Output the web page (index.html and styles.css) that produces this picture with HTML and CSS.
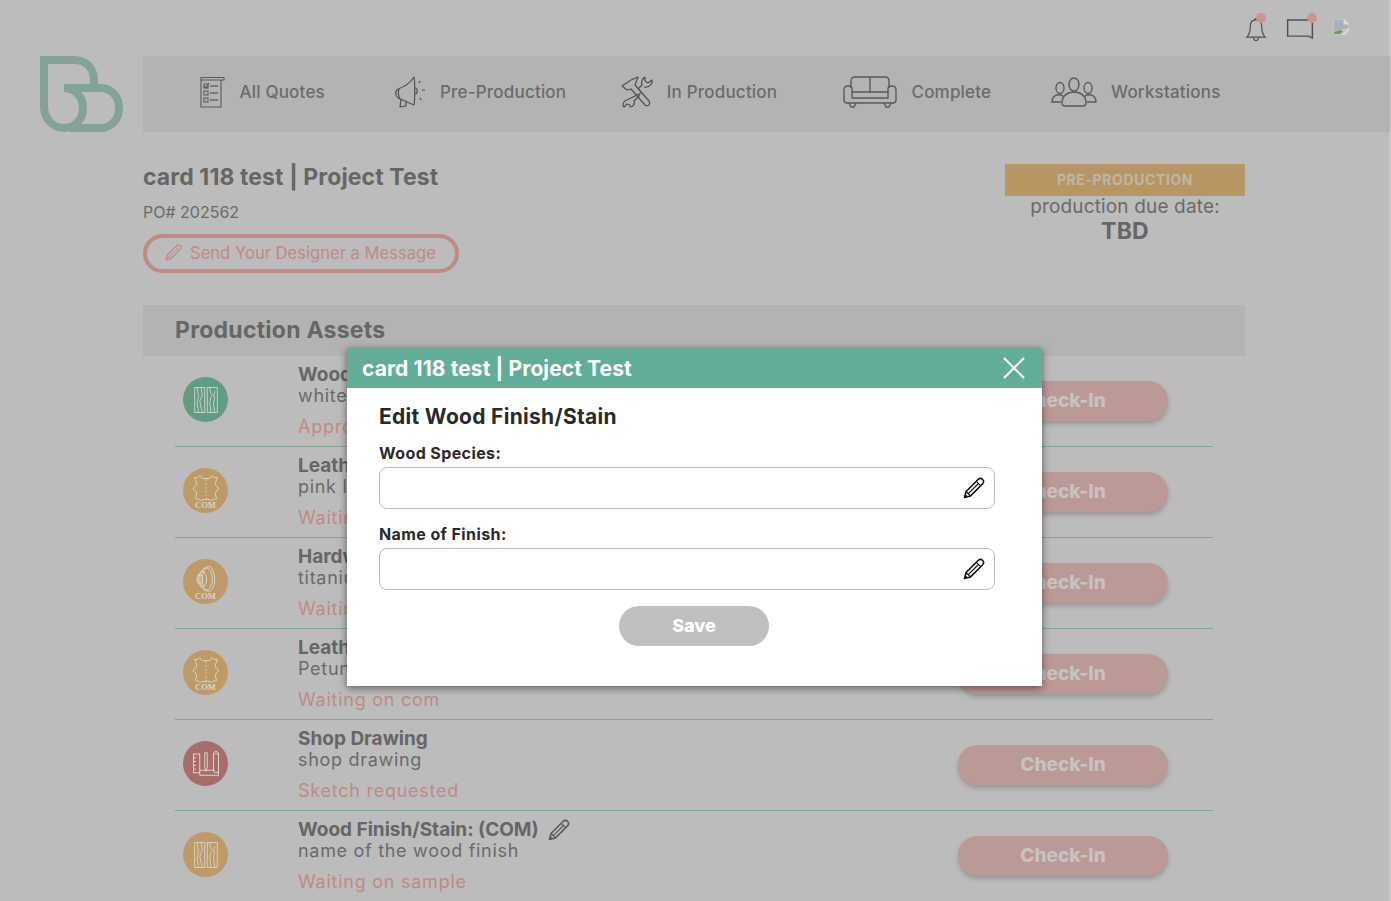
FILE: index.html
```html
<!DOCTYPE html>
<html lang="en">

<head>
    <meta charset="UTF-8" />
    <meta name="viewport" content="width=device-width, initial-scale=1.0" />
    <title>card 118 test | Project Test</title>
    <link rel="stylesheet" href="styles.css">
</head>

<body>
    <svg class="defs" xmlns="http://www.w3.org/2000/svg">
        <symbol id="pencil" viewBox="0 0 24 24">
            <path d="M2.500 21.500l1.600-6L16.300 3.300a2.900 2.900 0 0 1 4.200 0l.2.2a2.900 2.900 0 0 1 0 4.200L8.500 19.900z" fill="none" stroke="currentColor" stroke-width="1.600" stroke-linejoin="round" />
            <path d="M14.300 5.300l4.400 4.400M4.100 15.500l4.400 4.400M6.300 17.700L16.500 7.500" fill="none" stroke="currentColor" stroke-width="1.200" />
            <path d="M2.500 21.500l.9-3.400 2.500 2.500z" fill="currentColor" />
        </symbol>
        <symbol id="wood" viewBox="0 0 24 24">
            <g fill="none" stroke="currentColor" stroke-width=".7">
                <rect x="3" y="2" width="8" height="20" />
                <rect x="13" y="2" width="8" height="20" />
                <path d="M5 2l1 7-1 5 1 8M8 2l1 6-2 5 2 9M15 2l1 5 2 2 1-4M16 9l-1 5 1 8M19 9l-1 6 1 7" />
            </g>
        </symbol>
        <symbol id="leather" viewBox="0 0 30 24">
            <path d="M10 2c1 2 2 2.500 5 2.500S19 4 20 2c1 1.500 3 2 4 1.500 0 2-1.500 3-1.500 5 0 2 2 3 3 4-1.500 1-3 2.500-3 4.500 0 1.500 1 2.500 1 3.500-1.500 0-3 .5-4 1.500-1-.5-3-1-4.500-1s-3.500.5-4.500 1c-1-1-2.500-1.500-4-1.500 0-1 1-2 1-3.500 0-2-1.500-3.500-3-4.500 1-1 3-2 3-4 0-2-1.500-3-1.500-5 1 .5 3 0 4-1.500z" fill="none" stroke="currentColor" stroke-width=".8" />
            <path d="M15 5v16" fill="none" stroke="currentColor" stroke-width=".7" stroke-dasharray="1.500 1.500" />
        </symbol>
        <symbol id="knob" viewBox="0 0 30 24">
            <g fill="none" stroke="currentColor" stroke-width=".8">
                <ellipse cx="17" cy="12" rx="5" ry="10" />
                <ellipse cx="15" cy="12" rx="5" ry="9" />
                <ellipse cx="12" cy="12" rx="3.500" ry="6" />
                <rect x="8" y="9" width="4" height="6" rx="1" />
            </g>
        </symbol>
        <symbol id="drawing" viewBox="0 0 24 24">
            <g fill="none" stroke="currentColor" stroke-width=".8">
                <rect x="2" y="4" width="5" height="15" />
                <path d="M2 7h2M2 10h2M2 13h2M2 16h2" />
                <path d="M7 17h12M19 4h3v17H7v-2" />
                <rect x="18" y="2" width="4" height="17" rx="2" />
                <path d="M11 3h2v12l-1 3-1-3z" />
            </g>
        </symbol>
    </svg>

    <div class="page">
        <header class="topbar">
            <span class="top-icon">
                <svg class="bell" viewBox="0 0 22 24"><path d="M11 2c-4 0-6 3-6 7 0 5-1 8-3.500 11h19c-2.500-3-3.500-6-3.500-11 0-4-2-7-6-7zM8.500 20.500c0 2 1 3 2.500 3s2.500-1 2.500-3M10 2V1h2v1" fill="none" stroke="#505050" stroke-width="1.300" /></svg>
                <i class="dot dot-bell"></i>
            </span>
            <span class="top-icon">
                <svg class="chat" viewBox="0 0 28 21"><path d="M1 1h26v19l-4-2H1z" fill="none" stroke="#505050" stroke-width="1.500" /></svg>
                <i class="dot dot-chat"></i>
            </span>
            <svg class="broken" viewBox="0 0 16 16">
                <path d="M0 0h11l5 5v11H0z" fill="#c4c4c4" />
                <path d="M1 1h9v5h5v3L1 12z" fill="#a9b0bc" />
                <path d="M1 15v-2l6-2 3 1-3 3z" fill="#6f9a63" />
                <path d="M11 0l5 5h-5z" fill="#dcdcdc" />
                <path d="M9 16l7-7v2l-5 5z" fill="#e0e0e0" />
            </svg>
        </header>

        <div class="navrow">
            <svg class="logo" viewBox="0 0 83 76">
                <path d="M4 4H34C46 4 54 12 54 24V32M4 0V50C4 63 13 72 24 72C36 72 43 62 43 52C43 41 35 32 24 32H60C72 32 79 41 79 52C79 63 72 72 60 72H30" fill="none" stroke="#83a398" stroke-width="8" />
            </svg>
            <nav class="nav">
                <div class="nav-inner">
                    <a class="nav-item">
                        <svg class="ic-quotes" viewBox="0 0 26 32">
                            <g fill="none" stroke="#5a5a5a" stroke-width="1.100">
                                <path d="M2 4V31H22V4M2 1.500H25V4H2z" />
                                <path d="M5 8h4v4H5zM5 15h4v4H5zM5 22h4v4H5z" />
                                <path d="M5 10l2 2 3-5" />
                            </g>
                            <path d="M11 9h8v2h-8zM11 16h8v2h-8zM11 23h8v2h-8z" fill="#7a7a7a" />
                        </svg>
                        All Quotes
                    </a>
                    <a class="nav-item">
                        <svg class="ic-mega" viewBox="0 0 31 32">
                            <g fill="none" stroke="#505050" stroke-width="1.200" stroke-linejoin="round">
                                <path d="M19 1C15 7 9 11 3 13C0 15 0 20 3 22L19 29C20 24 20 6 19 1z" />
                                <path d="M4 13C3 16 3 19 5 23M6 23L5 31L11 30L11 25" />
                                <path d="M20 12C23 12 23 18 20 18M25 5L24 7M27 14H30M25 22L26 24M8 17h.1" />
                            </g>
                        </svg>
                        Pre-Production
                    </a>
                    <a class="nav-item">
                        <svg class="ic-tools" viewBox="0 0 32 32">
                            <g fill="none" stroke="#505050" stroke-width="1.200" stroke-linejoin="round">
                                <path d="M10 4L17 1L14 9L28 25C30 28 27 31 24 29L10 13L6 14L1 10z" />
                                <path d="M24 1C21 3 20 6 21 9L17 13M20 17L6 24C2 25 1 29 3 31L6 28L9 29L9 31C12 31 14 28 13 25L19 19M24 1L24 5L27 7L31 4C32 8 28 12 23 11" />
                            </g>
                        </svg>
                        In Production
                    </a>
                    <a class="nav-item">
                        <svg class="ic-sofa" viewBox="0 0 54 32">
                            <g fill="none" stroke="#5a5a5a" stroke-width="1.400" stroke-linejoin="round">
                                <path d="M8 12V5C8 3 9 1 12 1H42C45 1 46 3 46 5V12M27 1V17" />
                                <path d="M9 16V13C9 11 7 10 5 10C3 10 1 11 1 14V24C1 26 2 27 4 27H50C52 27 53 26 53 24V14C53 11 51 10 49 10C47 10 45 11 45 13V16z" />
                                <path d="M9 16V22H45V16M6 27L8 31H11L13 27M41 27L43 31H46L48 27" />
                            </g>
                        </svg>
                        Complete
                    </a>
                    <a class="nav-item">
                        <svg class="ic-people" viewBox="0 0 46 30">
                            <g fill="none" stroke="#5a5a5a" stroke-width="1.400">
                                <ellipse cx="23" cy="7.500" rx="5" ry="6.500" />
                                <ellipse cx="9" cy="11" rx="4" ry="5.500" />
                                <ellipse cx="37" cy="11" rx="4" ry="5.500" />
                                <path d="M14 29C12 29 11 28 11 26C11 19 16 15 23 15C30 15 35 19 35 26C35 28 34 29 32 29z" />
                                <path d="M12 19C6 16 1 19 1 25H10M34 19C40 16 45 19 45 25H36" />
                            </g>
                        </svg>
                        Workstations
                    </a>
                </div>
            </nav>
        </div>

        <main class="content">
            <section class="info">
                <div>
                    <h1>card 118 test | Project Test</h1>
                    <p class="po">PO# 202562</p>
                    <button class="msg-btn">
                        <svg class="ic-18"><use href="#pencil" /></svg>
                        Send Your Designer a Message
                    </button>
                </div>
                <div class="status">
                    <div class="status-tag">PRE-PRODUCTION</div>
                    <div class="due-label">production due date:</div>
                    <div class="due-value">TBD</div>
                </div>
            </section>

            <section>
                <h2 class="assets-title">Production Assets</h2>
                <div class="assets">
                    <div class="asset">
                        <span class="circle green"><svg class="ic-wood"><use href="#wood" /></svg></span>
                        <div class="asset-text">
                            <h3>Wood Species:</h3>
                            <p class="sub">white oak</p>
                            <p class="state">Approved</p>
                        </div>
                        <button class="check">Check-In</button>
                    </div>
                    <div class="asset">
                        <span class="circle tan">
                            <svg class="ic-leather"><use href="#leather" /></svg>
                            <span class="com">COM</span>
                        </span>
                        <div class="asset-text">
                            <h3>Leather: (COM)</h3>
                            <p class="sub">pink leather</p>
                            <p class="state">Waiting on com</p>
                        </div>
                        <button class="check">Check-In</button>
                    </div>
                    <div class="asset">
                        <span class="circle tan">
                            <svg class="ic-leather"><use href="#knob" /></svg>
                            <span class="com">COM</span>
                        </span>
                        <div class="asset-text">
                            <h3>Hardware: (COM)</h3>
                            <p class="sub">titanium</p>
                            <p class="state">Waiting on com</p>
                        </div>
                        <button class="check">Check-In</button>
                    </div>
                    <div class="asset">
                        <span class="circle tan">
                            <svg class="ic-leather"><use href="#leather" /></svg>
                            <span class="com">COM</span>
                        </span>
                        <div class="asset-text">
                            <h3>Leather: (COM)</h3>
                            <p class="sub">Petunia</p>
                            <p class="state">Waiting on com</p>
                        </div>
                        <button class="check">Check-In</button>
                    </div>
                    <div class="asset">
                        <span class="circle red"><svg class="ic-wood"><use href="#drawing" /></svg></span>
                        <div class="asset-text">
                            <h3>Shop Drawing</h3>
                            <p class="sub">shop drawing</p>
                            <p class="state">Sketch requested</p>
                        </div>
                        <button class="check">Check-In</button>
                    </div>
                    <div class="asset">
                        <span class="circle tan"><svg class="ic-wood"><use href="#wood" /></svg></span>
                        <div class="asset-text">
                            <h3>Wood Finish/Stain: (COM) <svg class="ic-edit"><use href="#pencil" /></svg></h3>
                            <p class="sub">name of the wood finish</p>
                            <p class="state">Waiting on sample</p>
                        </div>
                        <button class="check">Check-In</button>
                    </div>
                </div>
            </section>
        </main>
    </div>

    <div class="modal">
        <div class="modal-head">
            <span>card 118 test | Project Test</span>
            <svg class="close" viewBox="0 0 22 22"><path d="M1 1l20 20M21 1L1 21" fill="none" stroke="#fff" stroke-width="2.200" /></svg>
        </div>
        <form class="modal-body">
            <h2>Edit Wood Finish/Stain</h2>
            <label for="species">Wood Species:</label>
            <div class="field">
                <input type="text" id="species" />
                <svg class="field-ic"><use href="#pencil" /></svg>
            </div>
            <label for="finish">Name of Finish:</label>
            <div class="field">
                <input type="text" id="finish" />
                <svg class="field-ic"><use href="#pencil" /></svg>
            </div>
            <button type="button" class="save">Save</button>
        </form>
    </div>
</body>

</html>
```

FILE: styles.css
```css
* {
    margin: 0;
    padding: 0;
    box-sizing: border-box;
}

html,
body {
    height: 901px;
    overflow: hidden;
}

body {
    font-family: 'Inter', 'Liberation Sans', sans-serif;
    background-color: #bcbcbc;
    color: #666;
    position: relative;
    border-right: 1px solid #d2d2d2;
}

.defs {
    display: none;
}

button {
    font-family: inherit;
    border: none;
}

/* top bar */
.topbar {
    height: 56px;
    display: flex;
    justify-content: flex-end;
    align-items: flex-start;
    gap: 19px;
    padding: 18px 41px 0 0;
}

.top-icon {
    position: relative;
    display: block;
}

.bell {
    width: 22px;
    height: 23px;
    display: block;
}

.chat {
    width: 28px;
    height: 20px;
    display: block;
    margin-top: 1px;
}

.broken {
    width: 16px;
    height: 16px;
    margin-top: 1px;
}

.dot {
    position: absolute;
    width: 10px;
    height: 10px;
    border-radius: 50%;
    background-color: #c99694;
}

.dot-bell {
    top: -5px;
    right: 1px;
}

.dot-chat {
    top: -5px;
    right: -3px;
}

/* nav */
.navrow {
    display: flex;
    height: 76px;
    padding-left: 40px;
    gap: 20px;
}

.logo {
    width: 83px;
    height: 76px;
}

.nav {
    flex: 1;
    background-color: #b3b3b3;
    padding-left: 10px;
}

.nav-inner {
    width: 1092px;
    height: 100%;
    display: grid;
    grid-template-columns: repeat(5, 1fr);
}

.nav-item {
    display: flex;
    align-items: center;
    justify-content: center;
    gap: 14px;
    padding-bottom: 4px;
    font-size: 17px;
    font-weight: 500;
    letter-spacing: .2px;
    color: #6b6b6b;
}

.ic-quotes {
    width: 26px;
    height: 32px;
}

.ic-mega {
    width: 31px;
    height: 32px;
}

.ic-tools {
    width: 32px;
    height: 32px;
}

.ic-sofa {
    width: 54px;
    height: 32px;
}

.ic-people {
    width: 46px;
    height: 30px;
}

/* project info */
.content {
    width: 1102px;
    margin-left: 143px;
}

.info {
    display: flex;
    justify-content: space-between;
    padding-top: 32px;
    margin-bottom: 32px;
}

h1 {
    font-size: 23px;
    font-weight: 700;
    line-height: 26px;
    letter-spacing: .1px;
}

.po {
    font-size: 16px;
    line-height: 20px;
    margin-top: 12px;
    color: #6a6a6a;
}

.msg-btn {
    display: flex;
    align-items: center;
    gap: 7px;
    width: 316px;
    height: 39px;
    margin-top: 12px;
    padding: 0 0 2px 17px;
    border: 4px solid #c08a85;
    border-radius: 20px;
    background: none;
    color: #c08a85;
    font-size: 16.6px;
}

.ic-18 {
    width: 19px;
    height: 19px;
}

.status {
    width: 240px;
    text-align: center;
}

.status-tag {
    height: 32px;
    line-height: 32px;
    background-color: #b89664;
    color: #bdb6a9;
    font-size: 14px;
    font-weight: 700;
    letter-spacing: .6px;
}

.due-label {
    font-size: 19px;
    line-height: 22px;
    letter-spacing: .15px;
    color: #6a6a6a;
}

.due-value {
    font-size: 23px;
    font-weight: 700;
    line-height: 26px;
    letter-spacing: .2px;
}

/* production assets */
.assets-title {
    height: 51px;
    padding: 12px 32px 0;
    background-color: #b3b3b3;
    font-size: 23px;
    font-weight: 700;
    line-height: 26px;
    letter-spacing: .25px;
}

.assets {
    width: 1038px;
    margin-left: 32px;
}

.asset {
    height: 91px;
    display: flex;
    align-items: flex-start;
    border-bottom: 1px solid #7fa595;
}

.circle {
    position: relative;
    width: 45px;
    height: 45px;
    margin: 21px 70px 0 8px;
    border-radius: 50%;
    display: flex;
    align-items: center;
    justify-content: center;
    flex-shrink: 0;
    color: #d9d6cd;
}

.green {
    background-color: #5f9e83;
}

.tan {
    background-color: #bd9a66;
}

.red {
    background-color: #a76d6b;
}

.ic-wood {
    width: 30px;
    height: 30px;
}

.tan .ic-leather {
    width: 38px;
    height: 30px;
    margin-top: -6px;
}

.com {
    position: absolute;
    left: 0;
    right: 0;
    bottom: 3px;
    text-align: center;
    font-family: 'Liberation Serif', serif;
    font-size: 8.500px;
    font-weight: 700;
}

.asset-text {
    flex: 1;
    padding-top: 8px;
}

h3 {
    height: 21px;
    font-size: 19px;
    font-weight: 700;
    line-height: 21px;
    display: flex;
    align-items: center;
    gap: 8px;
}

.ic-edit {
    width: 24px;
    height: 24px;
    color: #5a5a5a;
}

.sub {
    font-size: 18px;
    line-height: 22px;
    letter-spacing: .7px;
    color: #6a6a6a;
}

.state {
    font-size: 18px;
    line-height: 24px;
    margin-top: 8px;
    letter-spacing: .75px;
    color: #c08a85;
}

.check {
    width: 210px;
    height: 40px;
    margin: 25px 45px 0 0;
    padding-bottom: 2px;
    border-radius: 20px;
    background-color: #bb9997;
    box-shadow: 0 3px 5px rgba(0, 0, 0, 0.2);
    color: #c6c3c0;
    font-size: 19px;
    font-weight: 800;
}

/* modal */
.modal {
    position: absolute;
    left: 347px;
    top: 348px;
    width: 695px;
    height: 338px;
    background-color: white;
    color: #2a2a2a;
    box-shadow: 0 2px 8px rgba(0, 0, 0, 0.5);
}

.modal-head {
    height: 40px;
    padding: 0 17px 0 15px;
    display: flex;
    align-items: center;
    justify-content: space-between;
    background-color: #62ad97;
    color: white;
    font-size: 21px;
    font-weight: 700;
    letter-spacing: .1px;
}

.close {
    width: 22px;
    height: 22px;
}

.modal-body {
    padding: 16px 47px 0 32px;
}

.modal-body h2 {
    font-size: 21px;
    font-weight: 700;
    line-height: 26px;
    letter-spacing: .3px;
    margin-bottom: 13px;
}

label {
    display: block;
    font-size: 16px;
    font-weight: 700;
    line-height: 20px;
    letter-spacing: .4px;
    margin-bottom: 4px;
}

.field {
    position: relative;
    margin-bottom: 15px;
}

.field input {
    display: block;
    width: 100%;
    height: 42px;
    border: 1px solid #bbb;
    border-radius: 8px;
}

.field-ic {
    position: absolute;
    right: 9px;
    top: 9px;
    width: 24px;
    height: 24px;
    color: #111;
}

.save {
    display: block;
    width: 150px;
    height: 40px;
    margin: 16px 0 0 240px;
    padding-bottom: 2px;
    border-radius: 20px;
    background-color: #bfbfbf;
    color: white;
    font-size: 18px;
    font-weight: 800;
}
```
